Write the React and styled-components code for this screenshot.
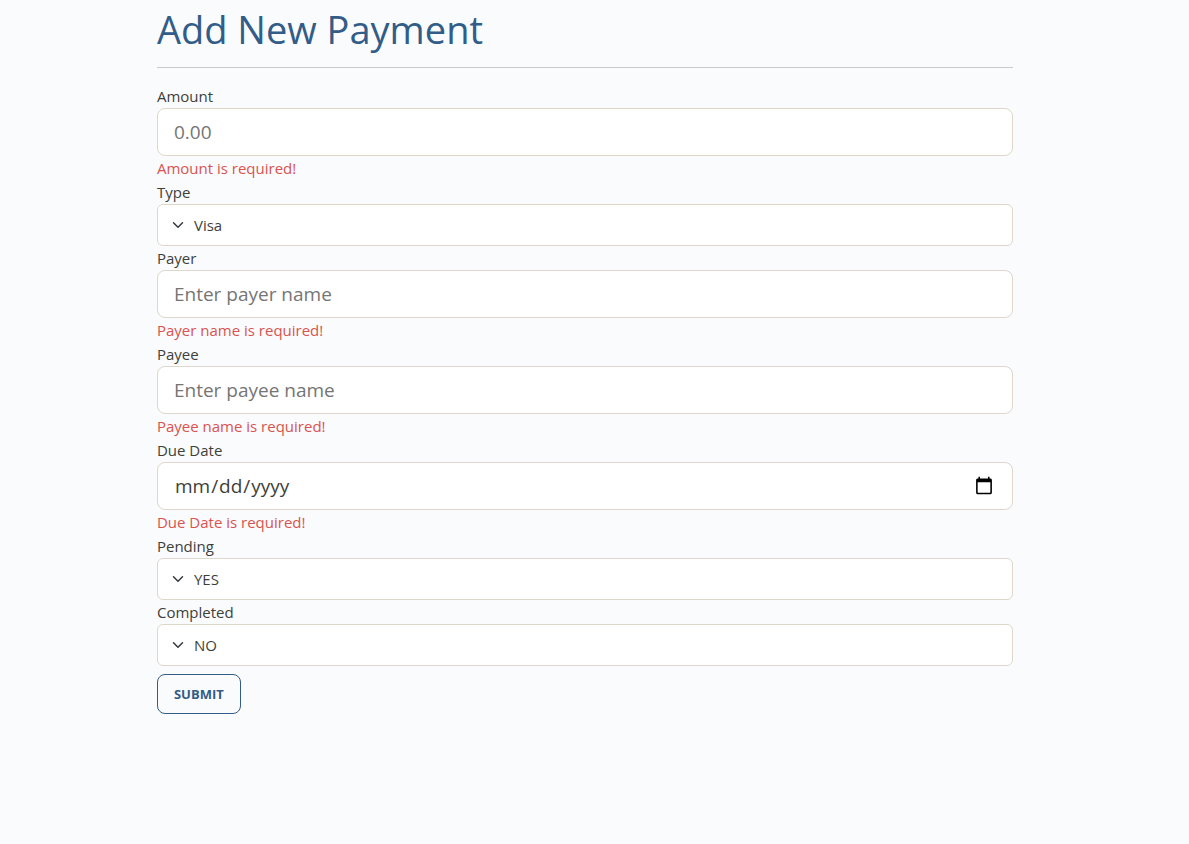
import React from "react";
import styled, { createGlobalStyle } from "styled-components";

const GlobalStyle = createGlobalStyle`
  *, *::before, *::after { box-sizing: border-box; }
  body {
    margin: 0;
    background: #fafbfd;
    color: #3e3f3a;
    font-family: "Open Sans", "Noto Sans", sans-serif;
    font-size: 15px;
    font-weight: 400;
    line-height: 24px;
  }
`;

const Page = styled.main`
  width: 72%;
  margin-left: 13.2%;
  padding: 5px 0 32px;
`;

const Title = styled.h1`
  margin: 0;
  color: #325d88;
  font-size: 38px;
  font-weight: 400;
  line-height: 48px;
`;

const Divider = styled.hr`
  height: 1px;
  margin: 14px 0 16px;
  border: 0;
  background: #c9cacc;
`;

const Form = styled.form`
  display: flex;
  flex-direction: column;
`;

const Label = styled.label`
  display: block;
`;

const Input = styled.input`
  display: block;
  width: 100%;
  height: 48px;
  padding: 8px 16px;
  border: 1px solid #dfd7ca;
  border-radius: 8px;
  background: #fff;
  color: #3e3f3a;
  font-family: inherit;
  font-size: 19px;
  line-height: 30px;

  &::placeholder {
    color: #757575;
    opacity: 1;
  }

  &::-webkit-calendar-picker-indicator {
    width: 20px;
    height: 20px;
  }
`;

const ErrorText = styled.div`
  color: #d9534f;
`;

const SelectBox = styled.div`
  position: relative;
`;

const Select = styled.select`
  appearance: none;
  display: block;
  width: 100%;
  height: 42px;
  padding: 8px 36px;
  border: 1px solid #dfd7ca;
  border-radius: 6px;
  background: #fff;
  color: #3e3f3a;
  font-family: inherit;
  font-size: 15px;
  line-height: 24px;
`;

const Chevron = styled.svg`
  position: absolute;
  top: 15px;
  left: 15px;
  width: 12px;
  height: 12px;
  fill: none;
  stroke: #343a40;
  stroke-width: 2;
  stroke-linecap: round;
  stroke-linejoin: round;
  pointer-events: none;
`;

const SubmitButton = styled.button`
  align-self: flex-start;
  height: 40px;
  margin-top: 8px;
  padding: 8px 16px;
  border: 1px solid #325d88;
  border-radius: 8px;
  background: transparent;
  color: #325d88;
  font-family: inherit;
  font-size: 13px;
  font-weight: 700;
  line-height: 18px;
  text-transform: uppercase;
  cursor: pointer;
`;

function TextField({ id, label, error, ...rest }) {
  return (
    <div>
      <Label htmlFor={id}>{label}</Label>
      <Input id={id} name={id} aria-describedby={`${id}-error`} {...rest} />
      <ErrorText id={`${id}-error`}>{error}</ErrorText>
    </div>
  );
}

function SelectField({ id, label, options, defaultValue }) {
  return (
    <div>
      <Label htmlFor={id}>{label}</Label>
      <SelectBox>
        <Select id={id} name={id} defaultValue={defaultValue}>
          {options.map((option) => (
            <option key={option}>{option}</option>
          ))}
        </Select>
        <Chevron viewBox="0 0 16 16" aria-hidden="true">
          <path d="M2 5l6 6 6-6" />
        </Chevron>
      </SelectBox>
    </div>
  );
}

export default function App() {
  return (
    <>
      <GlobalStyle />
      <Page>
        <Title>Add New Payment</Title>
        <Divider />
        <Form noValidate onSubmit={(event) => event.preventDefault()}>
          <TextField id="amount" label="Amount" type="text" inputMode="decimal" placeholder="0.00" error="Amount is required!" />
          <SelectField id="type" label="Type" options={["Visa"]} defaultValue="Visa" />
          <TextField id="payer" label="Payer" type="text" placeholder="Enter payer name" error="Payer name is required!" />
          <TextField id="payee" label="Payee" type="text" placeholder="Enter payee name" error="Payee name is required!" />
          <TextField id="dueDate" label="Due Date" type="date" error="Due Date is required!" />
          <SelectField id="pending" label="Pending" options={["YES", "NO"]} defaultValue="YES" />
          <SelectField id="completed" label="Completed" options={["YES", "NO"]} defaultValue="NO" />
          <SubmitButton type="submit">Submit</SubmitButton>
        </Form>
      </Page>
    </>
  );
}
